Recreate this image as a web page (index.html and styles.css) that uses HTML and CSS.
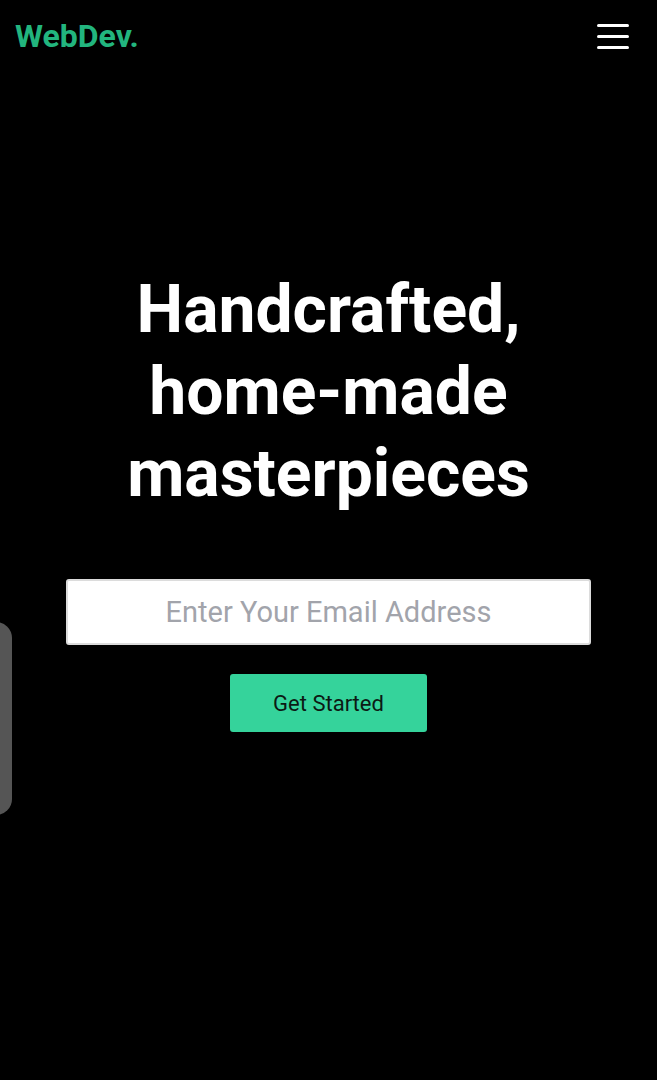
FILE: index.html
```html
<!DOCTYPE html>
<html lang="en">
<head>
<meta charset="utf-8">
<title>WebDev.</title>
<link rel="stylesheet" href="styles.css">
</head>
<body>
<header class="topbar">
  <a class="logo" href="#">WebDev.</a>
  <button class="menu" aria-label="Menu">
    <span class="bar"></span>
    <span class="bar"></span>
    <span class="bar"></span>
  </button>
</header>
<main class="hero">
  <h1 class="title">Handcrafted,<br>home-made<br>masterpieces</h1>
  <form class="signup">
    <input class="email" type="email" placeholder="Enter Your Email Address">
    <button class="cta" type="button">Get Started</button>
  </form>
</main>
<div class="edge-tab"></div>
</body>
</html>
```

FILE: styles.css
```css
html, body {
  margin: 0;
  padding: 0;
  background: #000;
  height: 100%;
}
body {
  font-family: Roboto, "Liberation Sans", sans-serif;
  color: #fff;
  position: relative;
  overflow: hidden;
}
.topbar {
  display: flex;
  justify-content: space-between;
  align-items: center;
  height: 72px;
  padding: 0 28px 0 15px;
}
.logo {
  color: #22b57e;
  font-weight: 700;
  font-size: 32px;
  text-decoration: none;
}
.menu {
  background: none;
  border: 0;
  padding: 0;
  display: flex;
  flex-direction: column;
  gap: 8px;
  cursor: pointer;
}
.bar {
  display: block;
  width: 32px;
  height: 3px;
  background: #fff;
  border-radius: 2px;
}
.hero {
  display: flex;
  flex-direction: column;
  align-items: center;
  padding-top: 197px;
}
.title {
  margin: 0;
  font-size: 66px;
  line-height: 82px;
  font-weight: 700;
  text-align: center;
}
.signup {
  display: flex;
  flex-direction: column;
  align-items: center;
  margin-top: 64px;
  width: 100%;
}
.email {
  box-sizing: border-box;
  width: 525px;
  height: 66px;
  border: 2px solid #dcdcdc;
  border-radius: 3px;
  background: #fff;
  font-family: Roboto, "Liberation Sans", sans-serif;
  font-size: 29px;
  text-align: center;
  color: #333;
  outline: none;
}
.email::placeholder {
  color: #a2a4ab;
}
.cta {
  margin-top: 29px;
  width: 197px;
  height: 58px;
  border: 0;
  border-radius: 3px;
  background: #35d39b;
  color: #0c1a14;
  font-family: Roboto, "Liberation Sans", sans-serif;
  font-size: 22px;
  cursor: pointer;
}
.edge-tab {
  position: absolute;
  left: -20px;
  top: 622px;
  width: 32px;
  height: 193px;
  background: #555;
  border-radius: 16px;
}
```
